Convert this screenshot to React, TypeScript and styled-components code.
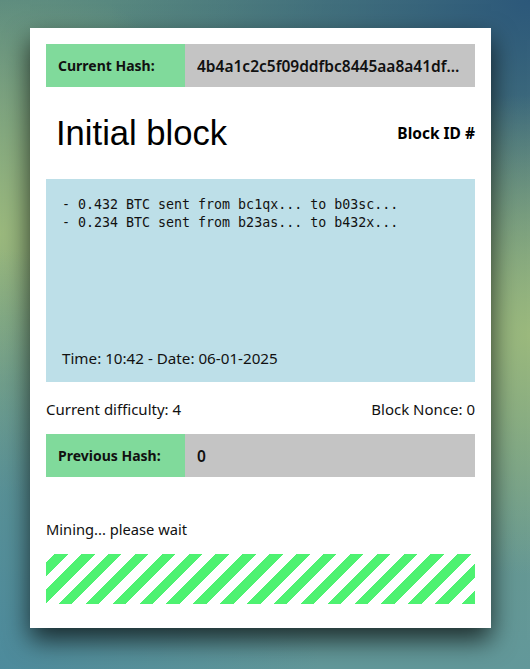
import React from "react";
import styled, { createGlobalStyle } from "styled-components";

const GlobalStyle = createGlobalStyle`
  html, body {
    margin: 0;
    padding: 0;
    height: 100%;
  }
  body {
    font-family: "Noto Sans", "DejaVu Sans", sans-serif;
    background:
      radial-gradient(ellipse 320px 420px at 0% 100%, rgba(76, 138, 156, 0.95), transparent 100%),
      radial-gradient(ellipse 260px 240px at 100% 50%, rgba(155, 185, 125, 1), transparent 100%),
      radial-gradient(ellipse 240px 260px at 0% 35%, rgba(155, 185, 125, 1), transparent 100%),
      radial-gradient(ellipse 420px 330px at 100% 0%, rgba(44, 88, 122, 1), transparent 100%),
      linear-gradient(to bottom, #58887f 0%, #6f9a86 45%, #62989a 100%);
  }
  #root {
    min-height: 669px;
  }
`;

const Page = styled.div`
  box-sizing: border-box;
  padding: 28px 39px 0 30px;
`;

const Card = styled.div`
  box-sizing: border-box;
  width: 461px;
  height: 600px;
  background: #ffffff;
  padding: 16px;
  box-shadow: 0 12px 24px rgba(0, 0, 0, 0.7);
  display: flex;
  flex-direction: column;
`;

const HashRow = styled.div`
  display: flex;
  height: 43px;
  color: #111;
`;

const HashLabel = styled.div`
  width: 139px;
  flex-shrink: 0;
  background: #80da9b;
  display: flex;
  align-items: center;
  padding-left: 12px;
  box-sizing: border-box;
  font-size: 14px;
  font-weight: 700;
`;

const HashValue = styled.div`
  flex: 1;
  min-width: 0;
  background: #c4c4c4;
  display: flex;
  align-items: center;
  padding: 0 14px 0 12px;
  overflow: hidden;
  font-size: 15.5px;
  font-weight: 600;

  span {
    overflow: hidden;
    white-space: nowrap;
    text-overflow: ellipsis;
  }
`;

const TitleRow = styled.div`
  display: flex;
  align-items: center;
  justify-content: space-between;
  height: 92px;
`;

const Title = styled.h1`
  margin: 0 0 0 10px;
  font-family: "Liberation Sans", Arial, sans-serif;
  font-weight: 400;
  font-size: 34.6px;
  color: #000;
`;

const BlockId = styled.div`
  font-size: 15.5px;
  font-weight: 700;
  color: #000;
`;

const DataBox = styled.div`
  height: 203px;
  background: #bddfe8;
  padding: 17px 16px 14px;
  box-sizing: border-box;
  display: flex;
  flex-direction: column;
  justify-content: space-between;
`;

const Transactions = styled.pre`
  margin: 0;
  font-family: "DejaVu Sans Mono", monospace;
  font-size: 13.3px;
  line-height: 18px;
  color: #111;
`;

const Timestamp = styled.div`
  font-size: 15.2px;
  color: #111;
`;

const InfoRow = styled.div`
  display: flex;
  justify-content: space-between;
  align-items: center;
  height: 52px;
  padding-top: 1px;
  box-sizing: border-box;
  font-size: 15px;
  color: #111;
`;

const Status = styled.div`
  margin-top: 42px;
  font-size: 14.7px;
  color: #111;
`;

const StripeBar = styled.div`
  margin-top: 15px;
  height: 50px;
  background: repeating-linear-gradient(
    -45deg,
    #4ef271 0px,
    #4ef271 9.5px,
    #ffffff 9.5px,
    #ffffff 19px
  );
`;

function HashField({ label, value }: { label: string; value: string }) {
  return (
    <HashRow>
      <HashLabel>{label}</HashLabel>
      <HashValue>
        <span>{value}</span>
      </HashValue>
    </HashRow>
  );
}

export default function App() {
  return (
    <>
      <GlobalStyle />
      <Page>
        <Card>
          <HashField
            label="Current Hash:"
            value="4b4a1c2c5f09ddfbc8445aa8a41df3e90c7a21b6"
          />
          <TitleRow>
            <Title>Initial block</Title>
            <BlockId>Block ID #</BlockId>
          </TitleRow>
          <DataBox>
            <Transactions>
              {"- 0.432 BTC sent from bc1qx... to b03sc...\n- 0.234 BTC sent from b23as... to b432x..."}
            </Transactions>
            <Timestamp>Time: 10:42 - Date: 06-01-2025</Timestamp>
          </DataBox>
          <InfoRow>
            <span>Current difficulty: 4</span>
            <span>Block Nonce: 0</span>
          </InfoRow>
          <HashField label="Previous Hash:" value="0" />
          <Status>Mining... please wait</Status>
          <StripeBar />
        </Card>
      </Page>
    </>
  );
}
